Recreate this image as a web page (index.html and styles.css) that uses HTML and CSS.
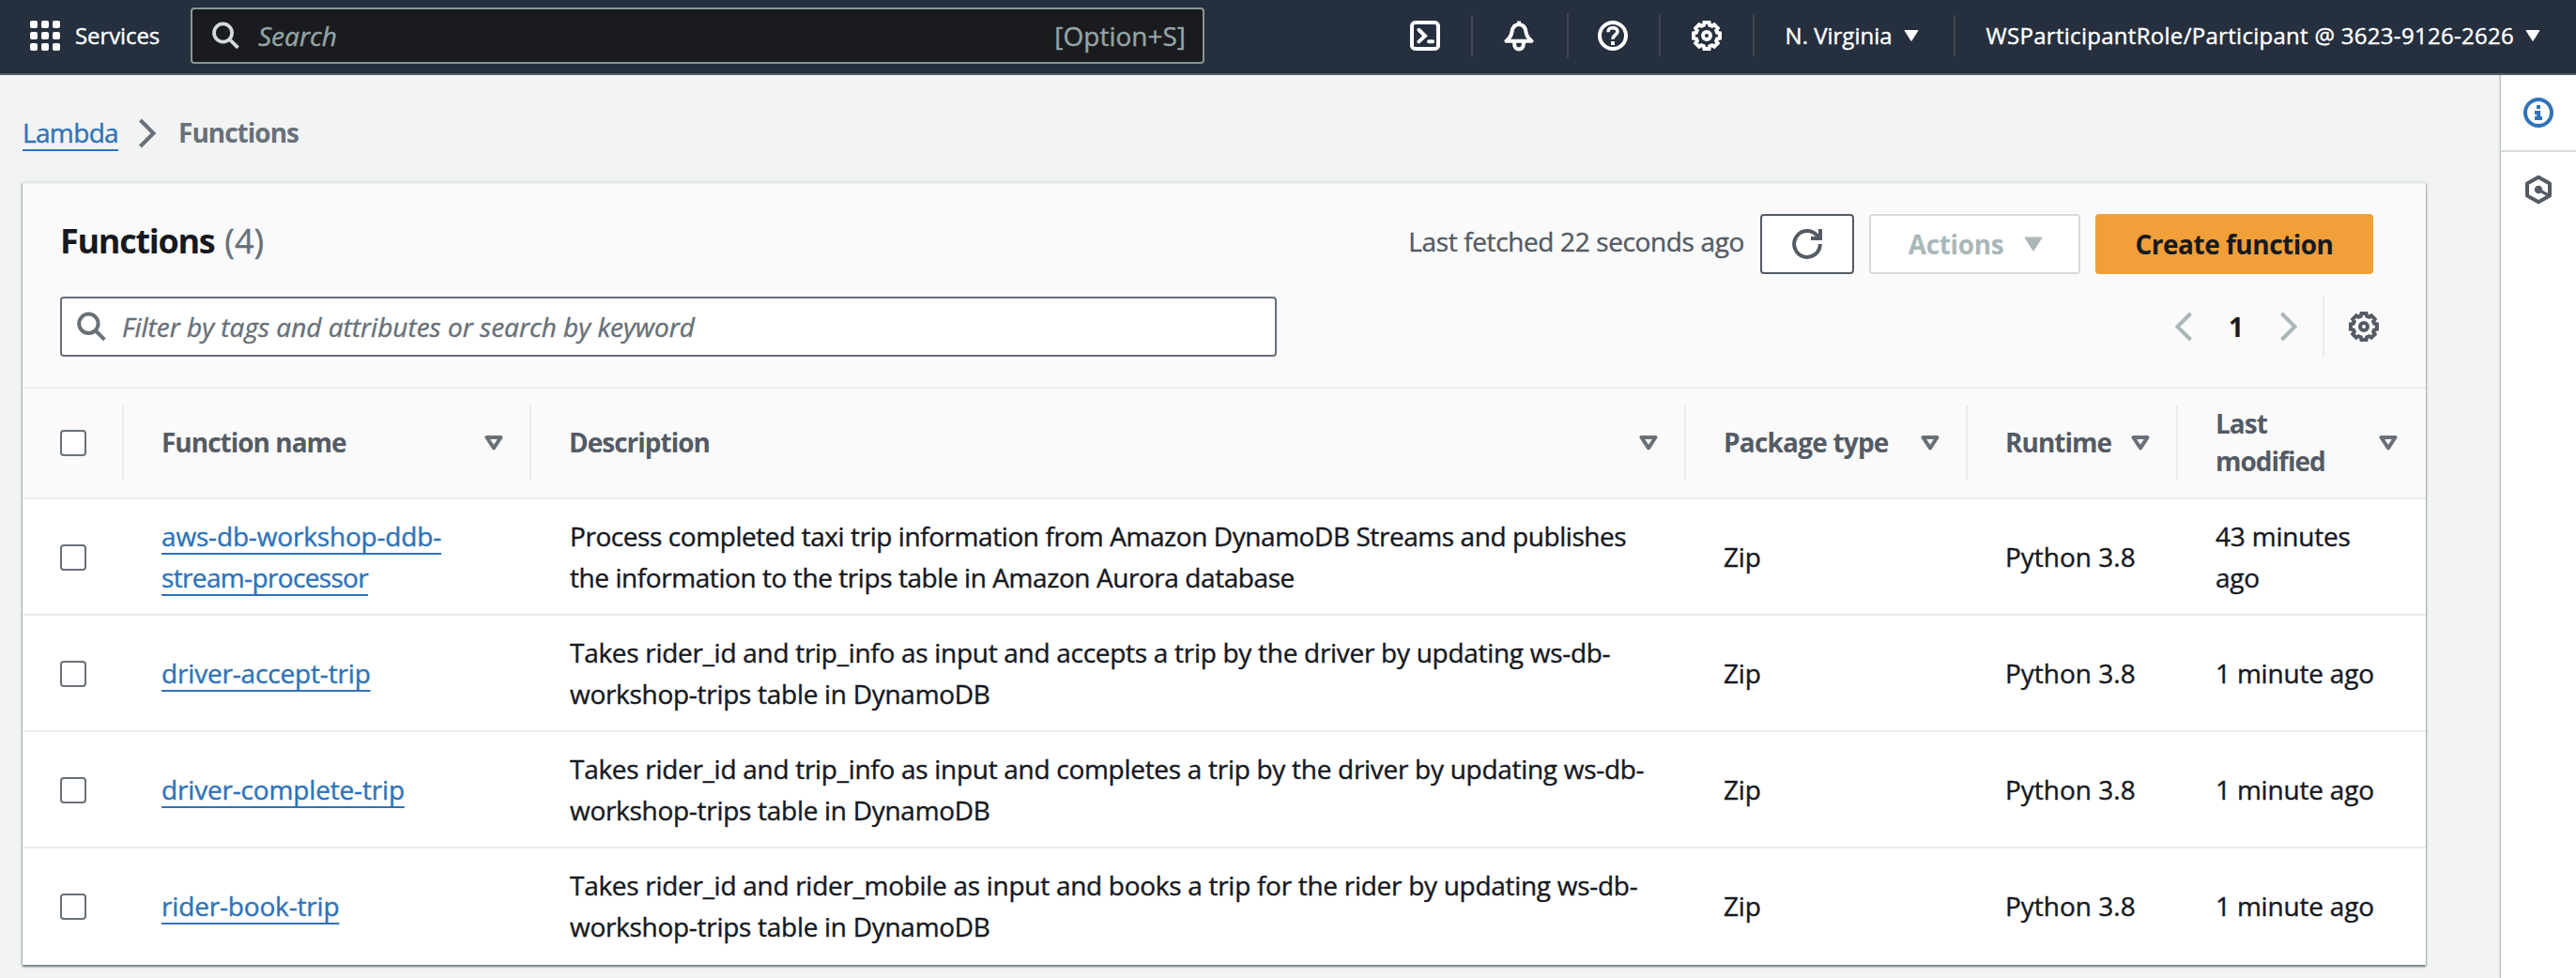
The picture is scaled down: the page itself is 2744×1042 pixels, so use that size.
FILE: index.html
```html
<!DOCTYPE html>
<html lang="en">
<head>
<meta charset="utf-8">
<title>Functions - Lambda</title>
<link rel="stylesheet" href="styles.css">
</head>
<body>
<svg class="sprite" aria-hidden="true">
  <symbol id="gear" viewBox="0 0 16 16"><path d="M6.4 2.4 6.7 1H9.3L9.6 2.4 10.83 2.91 12.03 2.13 13.87 3.97 13.09 5.17 13.6 6.4 15 6.7V9.3L13.6 9.6 13.09 10.83 13.87 12.03 12.03 13.87 10.83 13.09 9.6 13.6 9.3 15H6.7L6.4 13.6 5.17 13.09 3.97 13.87 2.13 12.03 2.91 10.83 2.4 9.6 1 9.3V6.7L2.4 6.4 2.91 5.17 2.13 3.97 3.97 2.13 5.17 2.91Z"/><circle cx="8" cy="8" r="2"/></symbol>
  <symbol id="search" viewBox="0 0 16 16"><circle cx="6.7" cy="6.4" r="5.1"/><path d="M10.3 10 15.2 14.9"/></symbol>
  <symbol id="sort" viewBox="0 0 20 16"><path d="M2.5 2H17.5L10 13.4Z"/></symbol>
  <symbol id="caret" viewBox="0 0 16 12"><path d="M1 .5H15L8 11.5Z"/></symbol>
  <symbol id="chevron" viewBox="0 0 20 32"><path d="M2.5 2 16.5 16 2.5 30"/></symbol>
</svg>

<header class="topbar">
  <svg class="apps" viewBox="0 0 32 32"><g fill="#fff"><rect width="8" height="8" rx="2"/><rect x="12" width="8" height="8" rx="2"/><rect x="24" width="8" height="8" rx="2"/><rect y="12" width="8" height="8" rx="2"/><rect x="12" y="12" width="8" height="8" rx="2"/><rect x="24" y="12" width="8" height="8" rx="2"/><rect y="24" width="8" height="8" rx="2"/><rect x="12" y="24" width="8" height="8" rx="2"/><rect x="24" y="24" width="8" height="8" rx="2"/></g></svg>
  <span class="services">Services</span>
  <div class="global-search">
    <svg class="line search-icon"><use href="#search"/></svg>
    <em>Search</em>
    <span class="shortcut">[Option+S]</span>
  </div>
  <nav class="tools">
    <div class="tool"><svg class="line icon" viewBox="0 0 16 16"><rect x="1" y="1" width="14" height="14" rx="1.8"/><path d="M4.7 4.9 8 8.1 4.7 11.2M10 11.1H12.1" stroke-linecap="round"/></svg></div>
    <div class="tool tool-bell"><svg class="line icon" viewBox="0 0 16 16"><path d="M1.2 10.9C3 9.4 3.9 8.2 4.2 6.2 4.6 3.3 5.9 2 8 2S11.4 3.3 11.8 6.2C12.1 8.2 13 9.4 14.8 10.9Z" stroke-linejoin="round"/><path d="M8 .3V2M5.6 11.5V12.8A2.4 2.4 0 0 0 10.4 12.8V11.5"/></svg></div>
    <div class="tool tool-help"><svg class="line icon" viewBox="0 0 16 16"><circle cx="8" cy="8" r="7"/><path d="M5.5 6.1C5.5 4.5 6.5 3.8 8 3.8S10.5 4.6 10.5 5.9C10.5 7.6 8 7.5 8 9.9" stroke-width="1.8"/><path d="M8 11V13"/></svg></div>
    <div class="tool"><svg class="line icon"><use href="#gear"/></svg></div>
    <div class="region"><span>N. Virginia</span><svg class="caret"><use href="#caret"/></svg></div>
    <div class="account"><span>WSParticipantRole/Participant @ 3623-9126-2626</span><svg class="caret"><use href="#caret"/></svg></div>
  </nav>
</header>

<div class="page">
  <main class="content">
    <nav class="breadcrumb">
      <a class="link">Lambda</a>
      <svg class="line chevron"><use href="#chevron"/></svg>
      <strong>Functions</strong>
    </nav>

    <section class="panel">
      <div class="panel-head">
        <div class="title-row">
          <h1>Functions</h1><span class="count">(4)</span>
          <span class="fetched">Last fetched 22 seconds ago</span>
          <div class="btn refresh"><svg class="line icon" viewBox="0 0 16 16"><path d="M14.9 8A6.9 7 0 1 1 13.2 3.4L14.4 5"/><path d="M15 0V5H10"/></svg></div>
          <div class="btn actions"><span>Actions</span><svg class="caret"><use href="#caret"/></svg></div>
          <div class="btn create">Create function</div>
        </div>
        <div class="filter-row">
          <div class="filter"><svg class="line search-icon"><use href="#search"/></svg><em>Filter by tags and attributes or search by keyword</em></div>
          <div class="pager">
            <svg class="line chevron prev"><use href="#chevron"/></svg>
            <b>1</b>
            <svg class="line chevron"><use href="#chevron"/></svg>
          </div>
          <svg class="line icon settings"><use href="#gear"/></svg>
        </div>
      </div>

      <div class="row head">
        <div class="cell check"><i class="box"></i></div>
        <div class="cell"><span>Function name</span><svg class="line sort"><use href="#sort"/></svg></div>
        <div class="cell"><span>Description</span><svg class="line sort"><use href="#sort"/></svg></div>
        <div class="cell pkg"><span>Package type</span><svg class="line sort"><use href="#sort"/></svg></div>
        <div class="cell"><span>Runtime</span><svg class="line sort"><use href="#sort"/></svg></div>
        <div class="cell"><span>Last<br>modified</span><svg class="line sort"><use href="#sort"/></svg></div>
      </div>
      <div class="row">
        <div class="cell check"><i class="box"></i></div>
        <div class="cell"><a class="link">aws-db-workshop-ddb-<br><span class="tight">stream-processor</span></a></div>
        <div class="cell desc stream">Process completed taxi trip information from Amazon DynamoDB Streams and publishes<br>the information to the trips table in Amazon Aurora database</div>
        <div class="cell">Zip</div>
        <div class="cell runtime">Python 3.8</div>
        <div class="cell">43 minutes<br>ago</div>
      </div>
      <div class="row">
        <div class="cell check"><i class="box"></i></div>
        <div class="cell"><a class="link">driver-accept-trip</a></div>
        <div class="cell desc">Takes rider_id and trip_info as input and accepts a trip by the driver by updating ws-db-<br>workshop-trips table in DynamoDB</div>
        <div class="cell">Zip</div>
        <div class="cell runtime">Python 3.8</div>
        <div class="cell">1 minute ago</div>
      </div>
      <div class="row">
        <div class="cell check"><i class="box"></i></div>
        <div class="cell"><a class="link">driver-complete-trip</a></div>
        <div class="cell desc">Takes rider_id and trip_info as input and completes a trip by the driver by updating ws-db-<br>workshop-trips table in DynamoDB</div>
        <div class="cell">Zip</div>
        <div class="cell runtime">Python 3.8</div>
        <div class="cell">1 minute ago</div>
      </div>
      <div class="row">
        <div class="cell check"><i class="box"></i></div>
        <div class="cell"><a class="link">rider-book-trip</a></div>
        <div class="cell desc">Takes rider_id and rider_mobile as input and books a trip for the rider by updating ws-db-<br>workshop-trips table in DynamoDB</div>
        <div class="cell">Zip</div>
        <div class="cell runtime">Python 3.8</div>
        <div class="cell">1 minute ago</div>
      </div>
    </section>
  </main>

  <aside class="rail">
    <div class="rail-item info"><svg class="line icon" viewBox="0 0 16 16"><circle cx="8" cy="8" r="7"/><path d="M8 4V6M6 8H8.1V11.2M6 11H10"/></svg></div>
    <div class="rail-item"><svg class="line icon" viewBox="0 0 16 16"><path d="M8 1.4 14 4.7V11.3L8 14.6 2 11.3V4.7Z" stroke-linejoin="round"/><circle cx="8" cy="8" r="1.1"/><path d="M8 8 13.5 11.2" stroke-width="1.6"/></svg></div>
  </aside>
</div>
</body>
</html>
```
FILE: styles.css
```css
* { box-sizing: border-box; }
body {
  margin: 0;
  width: 2744px;
  height: 1042px;
  overflow: hidden;
  background: #f2f3f3;
  color: #16191f;
  font: 28px/44px "Open Sans", "Noto Sans", sans-serif;
  white-space: nowrap;
  -webkit-text-stroke: .4px;
}
h1, b, strong, .btn, .head { -webkit-text-stroke: 0; }
svg { display: block; flex: none; overflow: visible; }
.sprite { position: absolute; width: 0; height: 0; }
.line { fill: none; stroke: currentColor; stroke-width: 2; }
.icon { width: 32px; height: 32px; }
.search-icon { width: 32px; height: 32px; }
.caret { width: 16px; height: 12px; fill: currentColor; stroke: currentColor; stroke-width: 1; stroke-linejoin: round; }
.chevron { width: 20px; height: 32px; stroke-width: 4; }

/* Top bar */
.topbar {
  display: flex;
  align-items: center;
  height: 80px;
  padding: 0 38px 2px 32px;
  background: #252f3e;
  border-bottom: 2px solid #545b64;
  color: #fff;
  font-size: 24px;
}
.apps { width: 32px; height: 32px; }
.services { width: 123px; margin-left: 16px; letter-spacing: -.1px; }
.global-search {
  display: flex;
  align-items: center;
  width: 1080px;
  height: 60px;
  padding: 0 18px 0 20px;
  background: #1a1b1f;
  border: 2px solid #879596;
  border-radius: 4px;
  color: #95a5a6;
  font-size: 28px;
}
.global-search .search-icon { width: 30px; height: 30px; color: #d5dbdb; }
.global-search em { margin-left: 20px; }
.shortcut { margin-left: auto; }
.tools { display: flex; align-items: center; margin-left: auto; }
.tool {
  display: flex;
  align-items: center;
  justify-content: center;
  width: 100px;
  height: 44px;
  border-right: 2px solid #414750;
}
.tool-bell { width: 102px; height: 48px; }
.tool-help { width: 98px; }
.tool-bell svg { margin-right: 2px; }
.tool-help svg { margin-right: 1px; }
.region {
  display: flex;
  align-items: center;
  justify-content: space-between;
  width: 214px;
  height: 44px;
  padding: 0 37px 0 33px;
  border-right: 2px solid #414750;
}
.account { display: flex; align-items: center; margin-left: 33px; gap: 12px; letter-spacing: .29px; }

/* Page */
.page { display: flex; height: 962px; }
.content { flex: 1; padding: 39px 80px 0 24px; }
.link {
  color: #2e73b8;
  text-decoration: underline;
  text-decoration-thickness: 2px;
  text-underline-offset: 7px;
  text-decoration-skip-ink: none;
  letter-spacing: -.17px;
}
.tight { letter-spacing: -.65px; }
.breadcrumb { display: flex; align-items: center; height: 44px; color: #687078; }
.breadcrumb .link { letter-spacing: -.65px; }
.breadcrumb .chevron { margin: 2px 23px 0 21px; }
.breadcrumb strong { letter-spacing: -1px; }

.panel {
  width: 2560px;
  margin-top: 31px;
  background: #fff;
  border-top: 2px solid #eaeded;
  box-shadow: 0 2px 2px rgba(0, 28, 36, .42), 0 1px 3px rgba(0, 28, 36, .4);
}
.panel-head { height: 216px; padding: 32px 56px 0 40px; background: #fafafa; }
.title-row { display: flex; align-items: center; height: 64px; }
h1 { margin: 0 11px 6px 0; font-size: 36px; letter-spacing: -1.3px; }
.count { margin-bottom: 6px; font-size: 36px; color: #687078; }
.fetched { margin: 0 17px 6px auto; color: #545b64; letter-spacing: -.37px; }
.btn {
  display: flex;
  align-items: center;
  justify-content: center;
  height: 64px;
  padding-bottom: 1px;
  border: 2px solid #545b64;
  border-radius: 4px;
  background: #fff;
  font-weight: 700;
}
.refresh { width: 100px; color: #545b64; }
.actions { width: 225px; margin-left: 16px; padding-left: 2px; gap: 22px; border-color: #d5dbdb; color: #aab7b8; letter-spacing: -.35px; }
.actions .caret { width: 20px; height: 16px; }
.create { width: 296px; margin-left: 16px; border: 0; background: #f19f39; letter-spacing: -.5px; }
.filter-row { display: flex; align-items: center; height: 64px; margin: 24px -56px 0 0; padding-right: 26px; }
.filter {
  display: flex;
  align-items: center;
  width: 1296px;
  height: 64px;
  padding-left: 15px;
  border: 2px solid #687078;
  border-radius: 4px;
  background: #fff;
  color: #687078;
}
.filter em { margin-left: 17px; }
.pager { display: flex; align-items: center; justify-content: space-between; width: 160px; height: 64px; margin-left: auto; padding-right: 26px; border-right: 2px solid #eaeded; color: #aab7b8; }
.pager b { color: #16191f; }
.prev { transform: scaleX(-1); }
.settings { margin: 0 24px 0 26px; color: #545b64; }

/* Table */
.row {
  display: grid;
  grid-template-columns: 108px 434px 1230px 300px 224px 264px;
  align-items: center;
  height: 124px;
  border-bottom: 2px solid #eaebeb;
}
.row:last-child { border-bottom: 0; padding-bottom: 2px; }
.cell { padding-left: 40px; letter-spacing: -.2px; }
.desc { padding-left: 41px; letter-spacing: -.29px; }
.stream { letter-spacing: -.43px; }
.runtime { letter-spacing: 0; }
.box { display: block; width: 28px; height: 28px; margin-top: 2px; border: 2px solid #687078; border-radius: 4px; background: #fff; }
.head {
  height: 120px;
  border-top: 2px solid #eaebeb;
  background: #fafafa;
  color: #545b64;
  font-weight: 700;
  line-height: 40px;
}
.head .cell {
  display: flex;
  align-items: center;
  justify-content: space-between;
  height: 80px;
  padding: 0 28px 0 40px;
  border-right: 2px solid #eaebeb;
  letter-spacing: -1px;
}
.head .pkg { letter-spacing: -.8px; }
.head .cell:last-child { border-right: 0; padding-right: 30px; }
.head .box { margin: 0; }
.head span { margin-top: -2px; }
.sort { width: 20px; height: 16px; color: #687078; stroke-width: 4; stroke-linejoin: round; }

/* Right rail */
.rail { width: 80px; background: #fff; box-shadow: 0 0 2px 1px rgba(0, 28, 36, .3); clip-path: inset(0 0 0 -4px); }
.rail-item { display: flex; align-items: center; justify-content: center; height: 80px; color: #545b64; }
.info { height: 82px; border-bottom: 2px solid #d5dbdb; color: #2e73b8; }
```
